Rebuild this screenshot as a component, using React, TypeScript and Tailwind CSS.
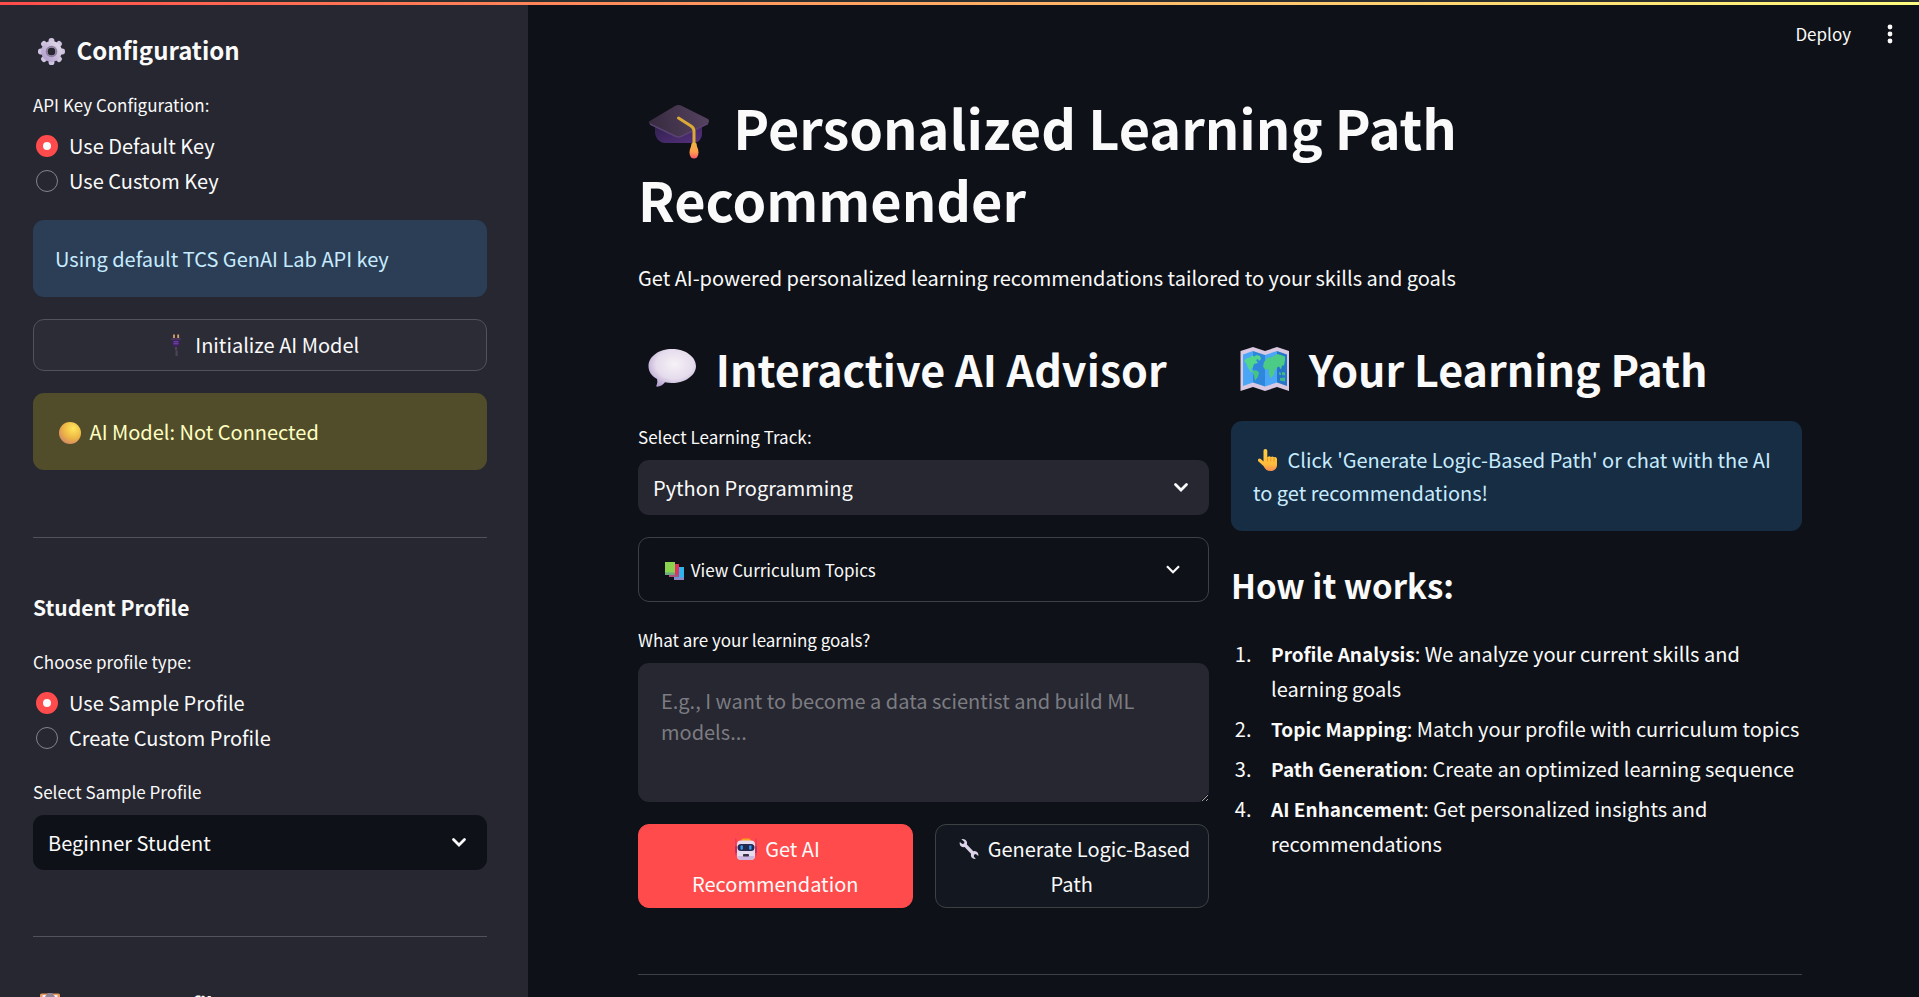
import React, { useState } from "react";

type IconProps = { className: string; box: string; children: React.ReactNode };

function Icon({ className, box, children }: IconProps) {
  return (
    <svg aria-hidden="true" viewBox={box} className={`inline-block overflow-visible ${className}`}>
      {children}
    </svg>
  );
}

const GearIcon = () => (
  <Icon className="h-[27px] w-[38px] align-[-5px]" box="0 0 38 27">
    <defs>
      <linearGradient id="gear" x1="0" y1="1" x2="1" y2="0">
        <stop offset="0" stopColor="#b3a0cf" />
        <stop offset="1" stopColor="#ded6e6" />
      </linearGradient>
    </defs>
    <g transform="translate(18.5 13.5)" fill="#cfc3df">
      {[0, 45, 90, 135, 180, 225, 270, 315].map((a) => (
        <rect key={a} x="-2.9" y="-13.5" width="5.8" height="7" rx="2.6" transform={`rotate(${a})`} />
      ))}
      <circle r="7.2" fill="none" stroke="url(#gear)" strokeWidth="6.4" />
      <circle r="5" fill="none" stroke="#8e7d9f" strokeWidth="1.6" />
    </g>
  </Icon>
);

const PlugIcon = () => (
  <Icon className="h-[22px] w-[30px] align-[-3px]" box="0 0 30 22">
    <path d="M13 0.5v4M17.2 0.5v4" stroke="#d9a26c" strokeWidth="1.8" />
    <rect x="10" y="4" width="10" height="2.2" rx="1" fill="#46345a" />
    <path d="M11 6h8v4.5l-2 2.5h-4l-2-2.5z" fill="#3b2157" />
    <path d="M12.5 7.8h5M12.5 9.8h5" stroke="#7c4fc4" strokeWidth="1" />
    <path d="M15 13v3M15.6 16.5V22" stroke="#4d4358" strokeWidth="2.2" />
  </Icon>
);

const YellowDot = () => (
  <Icon className="h-[22px] w-[30px] align-[-4px]" box="0 0 30 22">
    <defs>
      <radialGradient id="dot" cx="0.65" cy="0.3" r="0.75">
        <stop offset="0" stopColor="#ffe75c" />
        <stop offset="0.6" stopColor="#eeb545" />
        <stop offset="1" stopColor="#d28a62" />
      </radialGradient>
    </defs>
    <circle cx="15" cy="11" r="11" fill="url(#dot)" />
  </Icon>
);

const ClipboardIcon = () => (
  <Icon className="h-[26px] w-[34px] align-[-5px]" box="0 0 34 26">
    <rect x="7" y="1.5" width="20" height="24" rx="1.5" fill="#e79a5a" />
    <rect x="9.5" y="3" width="15" height="20" fill="#f2ecf8" />
    <path d="M12 6c0-3 2-3 3-5h4c1 2 3 2 3 5z" fill="#8f8597" />
    <path d="M12 11h10M12 15h10M12 19h7" stroke="#a99db5" strokeWidth="1.2" />
  </Icon>
);

const CapIcon = () => (
  <Icon className="h-[54px] w-[83px] align-[-9px]" box="0 0 83 54">
    <defs>
      <linearGradient id="board" x1="0" y1="0.5" x2="1" y2="0.4">
        <stop offset="0" stopColor="#362b3f" />
        <stop offset="1" stopColor="#55425f" />
      </linearGradient>
      <linearGradient id="cap" x1="0" y1="0" x2="1" y2="1">
        <stop offset="0" stopColor="#30204a" />
        <stop offset="1" stopColor="#55307f" />
      </linearGradient>
      <linearGradient id="tassel" x1="0" y1="0" x2="0" y2="1">
        <stop offset="0" stopColor="#efb443" />
        <stop offset="0.6" stopColor="#ff9d4d" />
        <stop offset="1" stopColor="#f9566c" />
      </linearGradient>
    </defs>
    <path d="M17 20h47v9c0 5-4 9-9 9H27c-6 0-10-6-10-11z" fill="url(#cap)" />
    <path d="M11 16.500 37 1q3.500-2 7 0l26 13q2 2 0 4.500L44 31q-3.500 2-7 0L12 19q-2-1-1-2.500z" fill="url(#board)" />
    <path d="M12 19 37 31q3.500 2 7 0l26-12.500" fill="none" stroke="#594271" strokeWidth="1.5" />
    <path d="M40.500 13 53 21q3 2 3 5v14" fill="none" stroke="#dba936" strokeWidth="3" strokeLinecap="round" />
    <path d="M53.500 38.500q2.500-2 5 0l.5 3c2 4 2 8 0 11q-3 2-6 0c-2-3-2-7 0-11z" fill="url(#tassel)" />
  </Icon>
);

const BubbleIcon = () => (
  <Icon className="h-[38px] w-[68px] align-[0px]" box="0 0 68 38">
    <defs>
      <radialGradient id="bubble" cx="0.55" cy="0.4" r="0.65">
        <stop offset="0" stopColor="#f6f2f7" />
        <stop offset="0.6" stopColor="#e5dcec" />
        <stop offset="1" stopColor="#b3a0d0" />
      </radialGradient>
    </defs>
    <path
      d="M34 0C47 0 58 7.500 58 17S47 34 34 34q-4 0-7-.8c-2 2.600-5 4.300-8 4.600q-1-.2-.6-1.200c1-2 1.200-4 .6-6.600C13.500 27 10.500 22.500 10.500 17 10.500 7.500 21 0 34 0z"
      fill="url(#bubble)"
    />
  </Icon>
);

const MapIcon = () => (
  <Icon className="h-[44px] w-[68px] align-[-4px]" box="0 0 68 44">
    <path d="M9.500 4 22 0l12 4L46 0l12 4v40l-12-4-12 4-12-4-12.500 4z" fill="#d9c8e2" />
    <path d="M12 7.500 22 4v31.500L12 39z" fill="#4ba6f7" />
    <path d="M22 4l12 4v31.500l-12-4z" fill="#2f87dc" />
    <path d="M34 8l12-4v31.500l-12 4z" fill="#4ba6f7" />
    <path d="M46 4l10 3.500V39l-10-3.500z" fill="#2576c9" />
    <path
      d="M13 14.500q2-4 6-4l2-2 3 1 1-1.500 4 1 1 3-2 2-1-2-2 1 2 3-4 1-1 3-2 2 2 3h-2l-3-4-2-5-1-1z"
      fill="#52d68c"
    />
    <path d="M22 23.500q4-1 6 2l-1 4-2 3-1 1-1-5-1-2z" fill="#46c481" />
    <path
      d="M33 15q2-3 4-4.500h3l3-1.500 3-2 4 1 4 1.500v4l-1 5-2 0-1 4-2-3-2 1-1 3-1-2-1 6-3 4-2-4 0-5-4 0-2-3z"
      fill="#4bcb86"
    />
    <path d="M48 25l2 1v2l-2-.500zM51 25l3 .500v3l-3-.500zM49 31l5-.500v4l-5-1z" fill="#44b988" />
  </Icon>
);

const BooksIcon = () => (
  <Icon className="h-[18px] w-[27px] align-[-3px]" box="-1 0 27 18">
    <rect x="13" y="5" width="10" height="13" fill="#2fb4ee" />
    <rect x="13" y="15.500" width="10" height="2.500" fill="#8f84c4" />
    <rect x="8" y="2" width="10" height="13" fill="#e5305e" />
    <rect x="8" y="12.500" width="10" height="2.500" fill="#b0507c" />
    <rect x="4" y="0" width="10" height="13" fill="#8bd34e" />
    <rect x="4" y="10.500" width="10" height="2.500" fill="#6fa980" />
  </Icon>
);

const HandIcon = () => (
  <Icon className="h-[22px] w-[30px] align-[-3px]" box="0 0 30 22">
    <defs>
      <linearGradient id="hand" x1="0" y1="0" x2="0" y2="1">
        <stop offset="0" stopColor="#ffcf42" />
        <stop offset="0.7" stopColor="#ffbb3b" />
        <stop offset="1" stopColor="#f58a52" />
      </linearGradient>
    </defs>
    <path
      d="M10.500 1.800a1.900 1.900 0 0 1 3.800 0V8h.4q1.600-1.400 3.200-.1 1.700-1.100 3 .3 2.500-.8 3.100 1.500v6c0 4-3 6.300-6.500 6.300-3.400 0-5.600-2-7-5L5.200 12.200c-.9-2 .9-3.600 2.600-2.200l2.700 2.600z"
      fill="url(#hand)"
    />
    <path d="M14.500 9v3M17.800 9v3M21 9.300v3" stroke="#e08a2e" strokeWidth="0.8" strokeLinecap="round" />
  </Icon>
);

const RobotIcon = () => (
  <Icon className="h-[22px] w-[30px] align-[-3px]" box="0 0 30 22">
    <path d="M4.800 1v16M25.200 1v16" stroke="#e63a63" strokeWidth="1.400" strokeLinecap="round" />
    <rect x="4" y="8" width="3" height="7" rx="1" fill="#c22f62" />
    <rect x="23" y="8" width="3" height="7" rx="1" fill="#c22f62" />
    <rect x="10.500" y="0.500" width="9" height="4" rx="1.500" fill="#f9a31f" />
    <rect x="6" y="2.500" width="18" height="19.500" rx="4" fill="#e6dcef" />
    <path d="M6.500 18h17q-.5 4-4 4h-9q-3.500 0-4-4z" fill="#cdb9e2" />
    <rect x="6.500" y="6" width="17" height="7" rx="3.500" fill="#26294d" />
    <rect x="9.500" y="7.300" width="2.400" height="4.400" rx="1.200" fill="#2f9cf0" />
    <rect x="18.100" y="7.300" width="2.400" height="4.400" rx="1.200" fill="#2f9cf0" />
    <rect x="12" y="16" width="6" height="2.400" rx="0.600" fill="#3a3346" />
  </Icon>
);

const WrenchIcon = () => (
  <Icon className="h-[22px] w-[30px] align-[-3px]" box="0 0 30 22">
    <path
      d="M8.300 1.200q3.500-.8 5.200 1.800 1 1.700.4 3.600l6.400 6.600q2.800-.7 4.500 1.600.9 1.500.5 3.300l-2.500-2-1.800.6-.2 1.900 2 2.300q-2.800.4-4.300-1.600-1-1.600-.5-3.600L11.600 9.100q-3 .6-4.400-1.700-.9-1.600-.4-3.300l2.500 2 1.800-.5.300-1.900z"
      fill="#ddd3e8"
    />
  </Icon>
);

function Chevron({ thin = false }: { thin?: boolean }) {
  return (
    <svg aria-hidden="true" viewBox="0 0 14 9" className="h-[9px] w-[14px] overflow-visible">
      <path
        d={thin ? "M1 1.200 7 7.200l6-6" : "M1.500 1.500 7 7l5.500-5.500"}
        fill="none"
        stroke="#fafafa"
        strokeWidth={thin ? 2.2 : 2.8}
        strokeLinecap={thin ? "butt" : "round"}
      />
    </svg>
  );
}

function RadioGroup({ name, legend, options }: { name: string; legend: string; options: string[] }) {
  const [value, setValue] = useState(options[0]);
  return (
    <fieldset>
      <legend className="mb-[9px] text-[17px] leading-[28px]">{legend}</legend>
      {options.map((option) => (
        <label key={option} className="flex h-[35px] items-center gap-[11px] pl-[3px] leading-[35px]">
          <input
            type="radio"
            name={name}
            checked={value === option}
            onChange={() => setValue(option)}
            className="size-[22px] shrink-0 appearance-none rounded-full border border-[#84848a] checked:border-[7px] checked:border-[#ff4b4b] checked:bg-[#fafafa]"
          />
          {option}
        </label>
      ))}
    </fieldset>
  );
}

function SelectField({ id, label, options, color }: { id: string; label: string; options: string[]; color: string }) {
  return (
    <div>
      <label htmlFor={id} className="mb-[9px] block text-[17px] leading-[28px]">
        {label}
      </label>
      <div className="relative">
        <select id={id} className={`block h-[55px] w-full appearance-none rounded-[11px] pr-14 pl-[15px] ${color}`}>
          {options.map((option) => (
            <option key={option}>{option}</option>
          ))}
        </select>
        <span className="pointer-events-none absolute inset-y-0 right-[21px] flex items-center">
          <Chevron />
        </span>
      </div>
    </div>
  );
}

const steps = [
  { title: "Profile Analysis", text: "We analyze your current skills and learning goals" },
  { title: "Topic Mapping", text: "Match your profile with curriculum topics" },
  { title: "Path Generation", text: "Create an optimized learning sequence" },
  { title: "AI Enhancement", text: "Get personalized insights and recommendations" },
];

function Sidebar() {
  return (
    <aside className="w-[528px] shrink-0 overflow-hidden bg-[#262730] pt-[28px] pr-[41px] pl-[33px]">
      <h2 className="mb-[25px] text-[24px] leading-[33px] font-bold">
        <GearIcon /> Configuration
      </h2>
      <RadioGroup name="key" legend="API Key Configuration:" options={["Use Default Key", "Use Custom Key"]} />
      <div className="mt-[22px] flex flex-col gap-[22px]">
        <p className="rounded-[11px] bg-[#2b3e56] p-[22px] leading-[33px] text-[#c7ebff]">
          Using default TCS GenAI Lab API key
        </p>
        <button type="button" className="h-[52px] rounded-[11px] border border-[#51525a] bg-[#2b2c36]">
          <PlugIcon /> Initialize AI Model
        </button>
        <p className="rounded-[11px] bg-[#514d2a] p-[22px] leading-[33px] text-[#ffffc2]">
          <YellowDot /> AI Model: Not Connected
        </p>
      </div>
      <hr className="mt-[67px] mb-[54px] border-[#51525a]" />
      <h3 className="mb-[26px] text-[21px] leading-[30px] font-bold">Student Profile</h3>
      <RadioGroup name="profile" legend="Choose profile type:" options={["Use Sample Profile", "Create Custom Profile"]} />
      <div className="mt-[23px]">
        <SelectField
          id="sample"
          label="Select Sample Profile"
          options={["Beginner Student", "Intermediate Student", "Advanced Student"]}
          color="bg-[#0e1117]"
        />
      </div>
      <hr className="mt-[66px] mb-[52px] border-[#51525a]" />
      <h3 className="text-[21px] leading-[30px] font-bold">
        <ClipboardIcon /> Current Profile
      </h3>
    </aside>
  );
}

function Advisor() {
  return (
    <section>
      <h2 className="mb-[25px] text-[43px] leading-[60px] font-bold">
        <BubbleIcon /> Interactive AI Advisor
      </h2>
      <SelectField
        id="track"
        label="Select Learning Track:"
        options={["Python Programming", "Data Science", "Web Development"]}
        color="bg-[#262730]"
      />
      <details className="mt-[22px] rounded-[11px] border border-[#3d4045]">
        <summary className="flex h-[63px] list-none items-center justify-between pr-[28px] pl-[21px] text-[17px]">
          <span>
            <BooksIcon /> View Curriculum Topics
          </span>
          <Chevron thin />
        </summary>
      </details>
      <label htmlFor="goals" className="mt-[24px] mb-[9px] block text-[17px] leading-[28px]">
        What are your learning goals?
      </label>
      <textarea
        id="goals"
        placeholder="E.g., I want to become a data scientist and build ML models..."
        className="block h-[139px] w-full resize-y rounded-[11px] bg-[#262730] px-[23px] py-[22px] leading-[31px] placeholder:text-[#7c7c82]"
      />
      <div className="mt-[22px] grid grid-cols-2 gap-[22px]">
        <button type="button" className="rounded-[11px] border border-[#ff4b4b] bg-[#ff4b4b] px-4 py-[6px] leading-[35px]">
          <RobotIcon /> Get AI Recommendation
        </button>
        <button type="button" className="rounded-[11px] border border-[#3d4045] bg-[#13171f] px-4 py-[6px] leading-[35px]">
          <WrenchIcon /> Generate Logic-Based Path
        </button>
      </div>
    </section>
  );
}

function LearningPath() {
  return (
    <section>
      <h2 className="mb-[23px] text-[43px] leading-[60px] font-bold">
        <MapIcon /> Your Learning Path
      </h2>
      <p className="rounded-[11px] bg-[#172d43] p-[22px] leading-[33px] text-[#c7ebff]">
        <HandIcon /> Click 'Generate Logic-Based Path' or chat with the AI to get recommendations!
      </p>
      <h3 className="mt-[31px] mb-[28px] text-[33px] leading-[46px] font-bold">How it works:</h3>
      <ol className="-mr-4 flex list-decimal flex-col gap-[5px] pl-[25px] leading-[35px]">
        {steps.map((step) => (
          <li key={step.title} className="pl-[15px]">
            <strong className="text-[19px] font-bold">{step.title}</strong>: {step.text}
          </li>
        ))}
      </ol>
    </section>
  );
}

export default function App() {
  return (
    <div className="flex h-screen flex-col overflow-hidden bg-[#0e1117] font-['Noto_Sans_CJK_SC',sans-serif] text-[20px] text-[#fafafa]">
      <div className="h-[5px] shrink-0 border-t-2 border-[#2d302e] bg-linear-to-r from-[#ff4b4b] to-[#fffd80]" />
      <div className="flex min-h-0 flex-1">
        <Sidebar />
        <div className="flex min-w-0 flex-1 flex-col overflow-hidden">
          <header className="flex h-[58px] shrink-0 items-center justify-end gap-[35px] pr-[25px] text-[17px]">
            <button type="button">Deploy</button>
            <button type="button" aria-label="Main menu">
              <svg aria-hidden="true" viewBox="0 0 8 20" className="h-[20px] w-[8px]" fill="#fafafa">
                <circle cx="4" cy="3" r="2.400" />
                <circle cx="4" cy="10" r="2.400" />
                <circle cx="4" cy="17" r="2.400" />
              </svg>
            </button>
          </header>
          <main className="pt-[28px] pr-[117px] pl-[110px]">
            <h1 className="text-[54px] leading-[72px] font-bold">
              <CapIcon /> Personalized Learning Path Recommender
            </h1>
            <p className="mt-[25px] leading-[35px]">
              Get AI-powered personalized learning recommendations tailored to your skills and goals
            </p>
            <div className="mt-[43px] grid grid-cols-2 gap-[22px]">
              <Advisor />
              <LearningPath />
            </div>
            <hr className="mt-[66px] border-[#3d4045]" />
          </main>
        </div>
      </div>
    </div>
  );
}
